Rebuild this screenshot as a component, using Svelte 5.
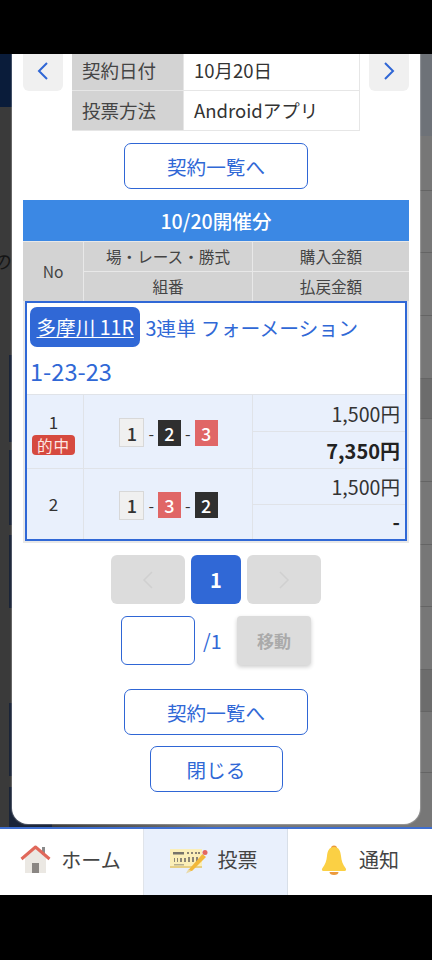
<script lang="ts">
  const rightBands = [
    { h: 55, dark: false }, { h: 62, dark: false }, { h: 63, dark: false }, { h: 63, dark: false },
    { h: 40, dark: true }, { h: 63, dark: false }, { h: 63, dark: false }, { h: 62, dark: false },
    { h: 63, dark: false }, { h: 42, dark: true }, { h: 61, dark: false }, { h: 60, dark: false }
  ];
  const leftCards = [
    { gap: 0, h: 87 }, { gap: 8, h: 75 }, { gap: 10, h: 73 }, { gap: 95, h: 73 }, { gap: 11, h: 40 }
  ];
  const races = [
    { no: 1, hit: true, nums: [1, 2, 3], buy: '1,500円', pay: '7,350円', h: 73 },
    { no: 2, hit: false, nums: [1, 3, 2], buy: '1,500円', pay: '-', h: 70 }
  ];
  const frameClass: Record<number, string> = { 1: 'num-white', 2: 'num-black', 3: 'num-red' };
</script>

<div class="screen">
  <div class="stage">
    <div class="bg" aria-hidden="true">
      <div class="bg-left">
        <div class="bg-navy"></div>
        <div class="bg-glyph">の</div>
        {#each leftCards as c}
          <div class="bg-card" style="margin-top: {c.gap}px; height: {c.h}px;"></div>
        {/each}
      </div>
      <div class="bg-right">
        <div class="bg-head"></div>
        {#each rightBands as b}
          <div class="bg-row" class:dark={b.dark} style="height: {b.h}px;"></div>
        {/each}
      </div>
    </div>

    <div class="modal">
      <div class="top">
        <button type="button" class="side">
          <svg width="14" height="20" viewBox="0 0 14 20"><path d="M11 2 3 10l8 8" fill="none" stroke="#2f66d5" stroke-width="2"/></svg>
        </button>
        <div class="contract">
          <div class="contract-label">契約日付</div>
          <div class="contract-value">10月20日</div>
          <div class="contract-label">投票方法</div>
          <div class="contract-value">Androidアプリ</div>
        </div>
        <button type="button" class="side">
          <svg width="14" height="20" viewBox="0 0 14 20"><path d="m3 2 8 8-8 8" fill="none" stroke="#2f66d5" stroke-width="2"/></svg>
        </button>
      </div>

      <button type="button" class="outline wide first">契約一覧へ</button>

      <div class="sheet">
        <div class="sheet-title">10/20開催分</div>
        <div class="sheet-head">
          <div class="head-no">No</div>
          <div>場・レース・勝式</div>
          <div>購入金額</div>
          <div>組番</div>
          <div>払戻金額</div>
        </div>
        <div class="ticket">
          <div class="ticket-title">
            <p class="ticket-line"><a href="#race" class="venue">多摩川 11R</a> <span class="kind">3連単 フォーメーション</span></p>
            <p class="ticket-combo">1-23-23</p>
          </div>
          {#each races as r}
            <div class="race" style="height: {r.h}px;">
              <div class="race-no">
                <span>{r.no}</span>
                {#if r.hit}<span class="hit">的中</span>{/if}
              </div>
              <div class="race-nums">
                {#each r.nums as n, i}
                  {#if i > 0}<span class="dash">-</span>{/if}
                  <span class="num {frameClass[n]}">{n}</span>
                {/each}
              </div>
              <div class="race-money">
                <div class="money">{r.buy}</div>
                <div class="money pay">{r.pay}</div>
              </div>
            </div>
          {/each}
        </div>
      </div>

      <div class="pager">
        <button type="button" class="page-btn">
          <svg width="12" height="18" viewBox="0 0 12 18"><path d="M10 1 2 9l8 8" fill="none" stroke="#d0d0d0" stroke-width="1.5"/></svg>
        </button>
        <button type="button" class="page-current">1</button>
        <button type="button" class="page-btn">
          <svg width="12" height="18" viewBox="0 0 12 18"><path d="m2 1 8 8-8 8" fill="none" stroke="#d0d0d0" stroke-width="1.5"/></svg>
        </button>
      </div>

      <div class="jump">
        <input class="jump-input" type="text" aria-label="page" />
        <span class="jump-total">/1</span>
        <button type="button" class="jump-btn">移動</button>
      </div>

      <button type="button" class="outline wide second">契約一覧へ</button>
      <button type="button" class="outline close">閉じる</button>
    </div>
  </div>

  <nav class="nav">
    <div class="nav-item home">
      <svg width="31" height="29" viewBox="0 0 31 29">
        <rect x="22" y="2" width="3" height="8" fill="#8a8a8a"/>
        <path d="M5 13 15.500 4 26 13v15H5z" fill="#ebe8e3"/>
        <rect x="12" y="18" width="7" height="10" fill="#8a8683"/>
        <path d="M1.500 14 15.500 2 29.500 14" fill="none" stroke="#e0685a" stroke-width="3" stroke-linejoin="round"/>
      </svg>
      <span>ホーム</span>
    </div>
    <div class="nav-item active">
      <svg width="38" height="28" viewBox="0 0 38 28">
        <rect x="0" y="3" width="32" height="19" fill="#fbefb8"/>
        <rect x="0" y="20" width="32" height="2" fill="#e6cf85"/>
        <rect x="3" y="6" width="11" height="2.500" fill="#77746a"/>
        <path d="M17 6h2v2h-2zM21 6h2v2h-2zM25 6h2v2h-2zM28 6h2v2h-2zM4 12h1v4H4zM7 12h1v4H7zM10 12h2v4h-2zM14 12h2v4h-2zM18 11h2v5h-2zM22 11h2v5h-2zM26 11h2v5h-2z" fill="#8b8575"/>
        <path d="M4 18h10v1.500H4z" fill="#b5ae90"/>
        <path d="M32.500 8 36 11 22 25 18 24.500z" fill="#f2b83a"/>
        <path d="M18.500 23 21 25.500 16 27.500z" fill="#e9d9a8"/>
        <circle cx="35" cy="6.500" r="2.500" fill="#e4675f"/>
      </svg>
      <span>投票</span>
    </div>
    <div class="nav-item bell">
      <svg width="26" height="30" viewBox="0 0 26 30">
        <circle cx="13" cy="3.500" r="3" fill="#ec9a3c"/>
        <path d="M8.500 27a4.500 3 0 0 0 9 0z" fill="#ec9a3c"/>
        <path d="M13 2c-5 0-6.500 4-7 9-.4 5-2 9-4.500 12-1 1.300-.8 3 1 3h21c1.800 0 2-1.700 1-3-2.500-3-4.100-7-4.500-12-.5-5-2-9-7-9z" fill="#fbd044"/>
      </svg>
      <span>通知</span>
    </div>
  </nav>
</div>

<style>
  :global(body) {
    margin: 0;
    background: #000;
  }

  .screen {
    display: flex;
    flex-direction: column;
    width: 432px;
    height: 960px;
    padding: 54px 0 65px;
    box-sizing: border-box;
    overflow: hidden;
    background: #000;
    font-family: "Noto Sans CJK JP", "Noto Sans", sans-serif;
    color: #333;
  }

  button {
    font-family: inherit;
    padding: 0;
    cursor: pointer;
  }

  .stage {
    position: relative;
    height: 773px;
    overflow: hidden;
    flex: none;
  }

  /* dimmed page behind the dialog */
  .bg {
    display: flex;
    height: 100%;
  }

  .bg-left {
    width: 216px;
    background: linear-gradient(90deg, #3a3a3a 52px, #777 216px);
    overflow: hidden;
  }

  .bg-navy {
    height: 53px;
    background: #0a1c3a;
  }

  .bg-glyph {
    margin: 140px 0 0 -9px;
    height: 108px;
    font-size: 19px;
    line-height: 28px;
    font-style: italic;
    color: #151515;
  }

  .bg-card {
    width: 52px;
    background: linear-gradient(90deg, #3a3a3a 9px, #1a2438 9px);
  }

  .bg-right {
    width: 216px;
    background: #777;
  }

  .bg-head {
    height: 82px;
    background: #6e7278;
  }

  .bg-row {
    box-sizing: border-box;
    border-bottom: 1px solid #646464;
  }

  .bg-row.dark {
    background: #6c6c6c;
  }

  .modal {
    position: absolute;
    top: 0;
    left: 12px;
    width: 408px;
    height: 770px;
    display: flex;
    flex-direction: column;
    align-items: center;
    overflow: hidden;
    background: #fff;
    border-radius: 0 0 16px 16px;
    box-shadow: 0 0 1px 1px rgba(255, 255, 255, 0.25);
  }

  .top {
    display: flex;
    justify-content: space-between;
    align-items: flex-start;
    width: 386px;
  }

  .side {
    display: flex;
    align-items: center;
    justify-content: center;
    width: 40px;
    height: 37px;
    padding-bottom: 3px;
    border: 0;
    border-radius: 0 0 6px 6px;
    background: #f0f0f0;
  }

  .contract {
    display: grid;
    grid-template-columns: 111px 1fr;
    gap: 1px 1px;
    width: 288px;
    margin-top: -3px;
    background: #e6e6e6;
    border: solid #e6e6e6;
    border-width: 0 1px 1px 0;
    box-sizing: border-box;
    font-size: 18.500px;
  }

  .contract-label,
  .contract-value {
    height: 39px;
    line-height: 39px;
    padding-left: 10px;
  }

  .contract-label {
    background: #d3d3d3;
    color: #444;
  }

  .contract-value {
    background: #fff;
    color: #333;
  }

  .outline {
    height: 46px;
    box-sizing: border-box;
    border: 1px solid #2f66d5;
    border-radius: 7px;
    background: #fff;
    color: #3068d6;
    font-size: 19.600px;
  }

  .wide {
    width: 184px;
  }

  .first {
    margin-top: 12px;
  }

  .sheet {
    width: 386px;
    margin-top: 11px;
    background: #e8e8e8;
    padding-bottom: 2px;
  }

  .sheet-title {
    height: 41px;
    line-height: 41px;
    text-align: center;
    background: #3b88e4;
    color: #fff;
    font-size: 19.600px;
    font-weight: 500;
  }

  .sheet-head {
    display: grid;
    grid-template-columns: 60px 168px 1fr;
    grid-template-rows: 29px 29px;
    gap: 1px;
    padding-top: 1px;
    font-size: 15.600px;
    color: #444;
    text-align: center;
    line-height: 29px;
  }

  .sheet-head > div {
    background: #d3d3d3;
  }

  .head-no {
    grid-row: span 2;
    line-height: 59px;
  }

  .ticket {
    margin: 0 2px;
    border: 2px solid #3068d6;
    background: #e0e3e8;
  }

  .ticket-title {
    background: #fff;
    padding: 4px 3px 0;
    height: 91px;
    box-sizing: border-box;
    color: #3068d6;
  }

  .ticket-line {
    margin: 0;
    display: flex;
    align-items: center;
    gap: 5px;
    font-size: 19.600px;
    height: 40px;
  }

  .kind {
    font-size: 19.800px;
    word-spacing: 0.500px;
  }

  .venue {
    display: block;
    height: 40px;
    line-height: 40px;
    padding: 0 6.500px;
    box-sizing: border-box;
    background: #3068d6;
    border-radius: 7px;
    color: #fff;
    text-underline-offset: 2px;
  }

  .ticket-combo {
    margin: 4px 0 0;
    font-size: 23.600px;
    line-height: 40px;
  }

  .race {
    display: grid;
    grid-template-columns: 56px 168px 1fr;
    gap: 1px;
    margin-top: 1px;
  }

  .race > div {
    background: #e9f0fc;
  }

  .race-no {
    display: flex;
    flex-direction: column;
    align-items: center;
    justify-content: center;
    padding-right: 3px;
    font-size: 17px;
    line-height: 26px;
    color: #333;
  }

  .hit {
    width: 43px;
    height: 20px;
    line-height: 20px;
    border-radius: 4px;
    background: #d64a3f;
    color: #fde8e4;
    font-size: 15.600px;
    letter-spacing: 1px;
    text-align: center;
  }

  .race-nums {
    display: flex;
    align-items: center;
    justify-content: center;
    gap: 4px;
    padding: 2px 0 0 1px;
    font-size: 16px;
  }

  .num {
    display: inline-flex;
    align-items: center;
    justify-content: center;
    width: 23px;
    height: 26px;
    font-weight: 500;
    font-size: 18px;
  }

  .num-white {
    width: 25px;
    height: 29px;
    box-sizing: border-box;
    border: 1px solid #d8d8d8;
    background: #f0f0f0;
    color: #333;
  }

  .num-black {
    background: #2f2f2f;
    color: #fff;
  }

  .num-red {
    background: #e06666;
    color: #fff;
  }

  .dash {
    color: #333;
  }

  .race-money {
    display: flex;
    flex-direction: column;
    gap: 1px;
    background: #e0e3e8 !important;
  }

  .money {
    flex: 1;
    display: flex;
    align-items: center;
    justify-content: flex-end;
    padding-right: 5px;
    background: #e9f0fc;
    font-size: 19.600px;
    color: #333;
  }

  .pay {
    font-size: 20px;
    font-weight: 700;
    color: #222;
  }

  .pager {
    display: flex;
    gap: 6px;
    margin-top: 12px;
  }

  .page-btn {
    display: flex;
    align-items: center;
    justify-content: center;
    width: 74px;
    height: 49px;
    border: 0;
    border-radius: 6px;
    background: #dcdcdc;
  }

  .page-current {
    width: 50px;
    height: 49px;
    border: 0;
    border-radius: 6px;
    background: #3068d6;
    color: #fff;
    font-size: 20px;
    font-weight: 700;
  }

  .jump {
    display: flex;
    align-items: center;
    width: 190px;
    margin-top: 12px;
  }

  .jump-input {
    width: 74px;
    height: 49px;
    box-sizing: border-box;
    border: 1px solid #2f66d5;
    border-radius: 6px;
    background: #fff;
    outline: none;
  }

  .jump-total {
    margin-left: 8px;
    width: 34px;
    color: #3068d6;
    font-size: 19.600px;
  }

  .jump-btn {
    width: 74px;
    height: 49px;
    border: 0;
    border-radius: 4px;
    background: #dcdcdc;
    color: #aaa;
    font-size: 17px;
    font-weight: 700;
    box-shadow: 0 2px 4px rgba(0, 0, 0, 0.2);
  }

  .second {
    margin-top: 24px;
  }

  .close {
    width: 133px;
    margin-top: 11px;
  }

  .nav {
    display: grid;
    grid-template-columns: repeat(3, 144px);
    height: 68px;
    flex: none;
    box-sizing: border-box;
    border-top: 2px solid #3f6fd0;
    background: #fff;
  }

  .nav-item {
    display: flex;
    align-items: center;
    justify-content: center;
    gap: 10px;
    padding-bottom: 5px;
    font-size: 20px;
    color: #444;
  }

  .nav-item.home {
    padding-right: 3px;
  }

  .nav-item.active {
    background: #e9f0fc;
    border-right: 1px solid #d8dfe8;
    box-shadow: -1px 0 0 #e0e4ea;
    padding-right: 4px;
  }

  .nav-item.bell {
    gap: 12px;
  }
</style>
